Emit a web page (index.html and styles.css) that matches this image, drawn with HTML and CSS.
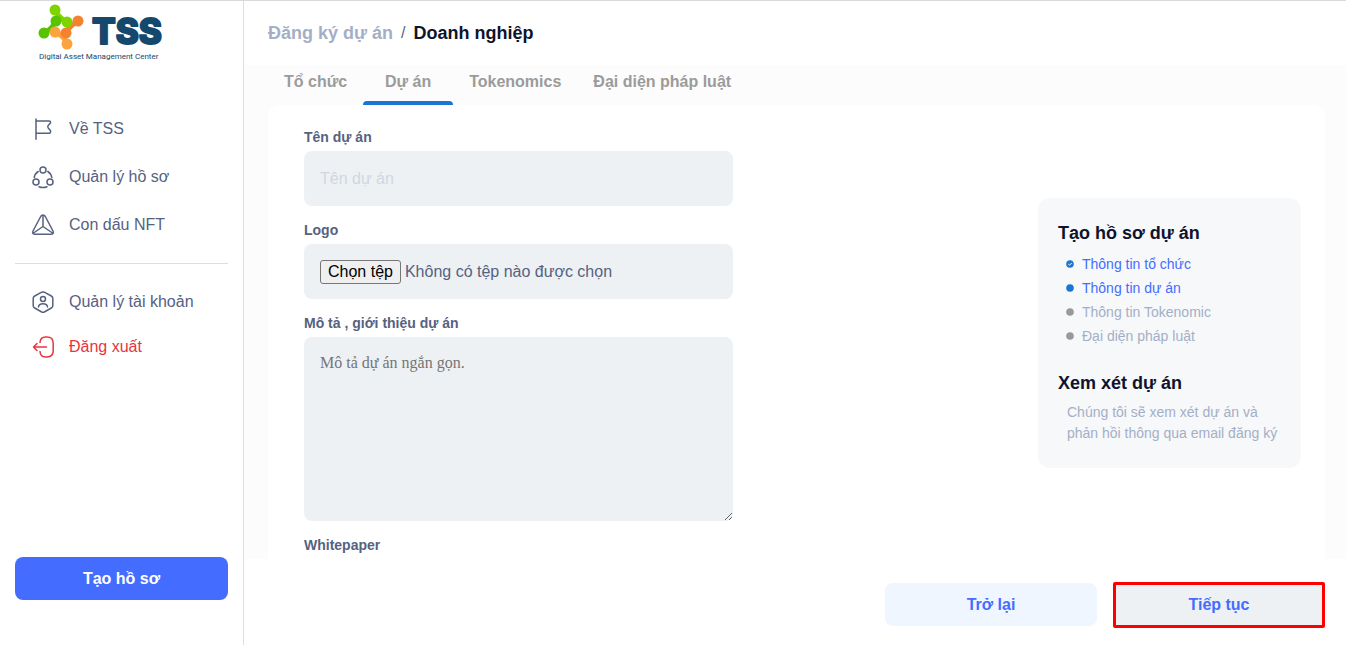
FILE: index.html
```html
<!DOCTYPE html>
<html lang="vi">
<head>
<meta charset="utf-8">
<meta name="viewport" content="width=device-width, initial-scale=1">
<title>Đăng ký dự án</title>
<link rel="stylesheet" href="styles.css">
</head>
<body>
<div class="app">
  <aside class="sidebar">
    <a class="brand" href="#">
      <svg class="brand-logo" viewBox="0 0 128 60" role="img" aria-label="TSS">
        <g stroke-linecap="round" stroke-width="5" fill="none">
          <path d="M18 7Q20 13 29 18" stroke="#7fd400"/>
          <path d="M6 29Q14 25 18 17" stroke="#56c500"/>
          <path d="M17 28Q26 32 29 40" stroke="#fba33c"/>
          <path d="M28 29Q31 22 39 18" stroke="#f5822f"/>
        </g>
        <circle cx="17" cy="6" r="5.500" fill="#7fd400"/><circle cx="29" cy="18" r="5.500" fill="#7fd400"/>
        <circle cx="6" cy="29" r="5.500" fill="#56c500"/><circle cx="18" cy="17" r="5.500" fill="#56c500"/>
        <circle cx="17" cy="28" r="5.500" fill="#fba33c"/><circle cx="29" cy="40" r="5.500" fill="#fba33c"/>
        <circle cx="28" cy="29" r="5.500" fill="#f5822f"/><circle cx="40" cy="17" r="5.500" fill="#f5822f"/>
        <text class="brand-name" x="54" y="40">TSS</text>
        <text class="brand-tagline" x="1" y="55">Digital Asset Management Center</text>
      </svg>
    </a>
    <nav class="nav">
      <a class="nav-item" href="#">
        <svg class="icon" viewBox="0 0 24 24"><path d="M5 2V22.300M5 4h13c1.500 0 2 1.200 1.200 2.200l-2 2.300a2 2 0 0 0 0 2.400l2 2.300c.9 1.200.3 3-1.200 3H5"/></svg>
        <span>Về TSS</span>
      </a>
      <a class="nav-item" href="#">
        <svg class="icon" viewBox="0 0 24 24"><circle cx="12" cy="5" r="3"/><circle cx="5" cy="17" r="3"/><circle cx="19" cy="17" r="3"/><path d="M7.200 6.500A9 9 0 0 0 3.200 12.500M16.800 6.500a9 9 0 0 1 4 6M8 21.700a10 10 0 0 0 8 0"/></svg>
        <span>Quản lý hồ sơ</span>
      </a>
      <a class="nav-item" href="#">
        <svg class="icon" viewBox="0 0 24 24"><path d="M9.700 3.500 2 18c-1 1.900 0 3.300 2 3.300h16c2 0 3-1.400 2-3.300L14.300 3.500c-1.100-1.900-3.500-1.900-4.600 0zM12 2.200v11.300M12 13.500 2.500 20M12 13.500l9.500 6.500"/></svg>
        <span>Con dấu NFT</span>
      </a>
    </nav>
    <nav class="nav nav-account">
      <a class="nav-item" href="#">
        <svg class="icon" viewBox="0 0 24 24"><path d="M10.700 2.200a3 3 0 0 1 2.600 0l7 3.800c1 .6 1.500 1.300 1.500 2.300v7.400c0 1-.5 1.800-1.500 2.300l-7 4a3 3 0 0 1-2.600 0l-7-4c-1-.5-1.500-1.300-1.500-2.300V8.300c0-1 .5-1.700 1.500-2.300z"/><circle cx="12" cy="9" r="2.500"/><path d="M7.500 17c.3-4.500 8.700-4.500 9 0"/></svg>
        <span>Quản lý tài khoản</span>
      </a>
      <a class="nav-item nav-item-danger" href="#">
        <svg class="icon" viewBox="0 0 24 24"><path d="M9 7.500c.3-4 2-5.500 5.500-5.500H16c4.500 0 6.200 1.800 6.200 6.200v7.600c0 4.400-1.700 6.200-6.200 6.200h-1.500c-3.500 0-5.200-1.500-5.500-5.500M15.500 12H2.500M6 8.500 2.500 12 6 15.500"/></svg>
        <span>Đăng xuất</span>
      </a>
    </nav>
    <button class="button button-primary" type="button">Tạo hồ sơ</button>
  </aside>

  <main class="main">
    <header class="page-header">
      <a class="crumb" href="#">Đăng ký dự án</a>
      <span class="crumb-separator">/</span>
      <h1 class="crumb-current">Doanh nghiệp</h1>
    </header>

    <div class="content">
      <div class="tabs" role="tablist">
        <button class="tab" type="button" role="tab">Tổ chức</button>
        <button class="tab tab-active" type="button" role="tab" aria-selected="true">Dự án</button>
        <button class="tab" type="button" role="tab">Tokenomics</button>
        <button class="tab" type="button" role="tab">Đại diện pháp luật</button>
      </div>
      <div class="card">
        <form class="form" id="project-form">
          <div class="field">
            <label class="label" for="project-name">Tên dự án</label>
            <input class="control" id="project-name" type="text" placeholder="Tên dự án">
          </div>
          <div class="field">
            <label class="label" for="project-logo">Logo</label>
            <label class="control file" for="project-logo">
              <input class="file-input" id="project-logo" type="file">
              <span class="file-button">Chọn tệp</span>
              <span>Không có tệp nào được chọn</span>
            </label>
          </div>
          <div class="field">
            <label class="label" for="project-about">Mô tả , giới thiệu dự án</label>
            <textarea class="control control-area" id="project-about" placeholder="Mô tả dự án ngắn gọn."></textarea>
          </div>
          <div class="field">
            <label class="label" for="project-paper">Whitepaper</label>
            <input class="control" id="project-paper" type="text">
          </div>
        </form>
        <aside class="progress">
          <h2 class="progress-title">Tạo hồ sơ dự án</h2>
          <ul class="steps">
            <li class="step step-on"><svg class="dot" viewBox="0 0 8 8"><circle cx="4" cy="4" r="3.800"/><path class="dot-check" d="M2.300 4.100 3.500 5.200 5.800 2.900"/></svg>Thông tin tổ chức</li>
            <li class="step step-on"><svg class="dot" viewBox="0 0 8 8"><circle cx="4" cy="4" r="3.800"/></svg>Thông tin dự án</li>
            <li class="step"><svg class="dot" viewBox="0 0 8 8"><circle cx="4" cy="4" r="3.800"/></svg>Thông tin Tokenomic</li>
            <li class="step"><svg class="dot" viewBox="0 0 8 8"><circle cx="4" cy="4" r="3.800"/></svg>Đại diện pháp luật</li>
          </ul>
          <h2 class="progress-title">Xem xét dự án</h2>
          <p class="progress-note">Chúng tôi sẽ xem xét dự án và phản hồi thông qua email đăng ký</p>
        </aside>
      </div>
    </div>

    <footer class="actions">
      <button class="button button-back" type="button">Trở lại</button>
      <button class="button button-next" type="submit" form="project-form">Tiếp tục</button>
    </footer>
  </main>
</div>
</body>
</html>
```

FILE: styles.css
```css
* {
  box-sizing: border-box;
}

body {
  margin: 0;
  font-family: "Liberation Sans", Arial, sans-serif;
  font-size: 16px;
  color: #56627f;
  background: #fff;
}

h1, h2, p, ul {
  margin: 0;
  padding: 0;
}

a {
  color: inherit;
  text-decoration: none;
}

button, input, textarea {
  font: inherit;
}

.app {
  display: flex;
  height: 100vh;
  border-top: 1px solid #d9d9d9;
}

/* Sidebar */
.sidebar {
  display: flex;
  flex-direction: column;
  flex: 0 0 244px;
  padding: 3px 15px 45px;
  border-right: 1px solid #dedede;
}

.brand {
  display: block;
  padding-left: 23px;
  margin-bottom: 41px;
}

.brand-logo {
  display: block;
  width: 128px;
  height: 60px;
  overflow: visible;
}

.brand-name {
  font-family: Inter, sans-serif;
  font-size: 35px;
  font-weight: 800;
  fill: #15486d;
  stroke: #15486d;
  stroke-width: 2;
  stroke-linejoin: round;
}

.brand-tagline {
  font-family: Roboto, sans-serif;
  font-size: 8px;
  fill: #15486d;
}

.nav {
  display: flex;
  flex-direction: column;
  padding: 0 16px 14px;
}

.nav-item {
  display: flex;
  align-items: center;
  gap: 14px;
  height: 48px;
}

.nav-item-danger {
  color: #e8343e;
}

.nav-account {
  padding-top: 15px;
  border-top: 1px solid #dedede;
}

.nav-account .nav-item {
  height: 45px;
}

.icon {
  flex: none;
  width: 24px;
  height: 24px;
  fill: none;
  stroke: currentColor;
  stroke-width: 1.5;
  stroke-linecap: round;
  stroke-linejoin: round;
}

.button {
  height: 43px;
  border: 0;
  border-radius: 8px;
  font-weight: 700;
  color: #446dff;
}

.button-primary {
  margin-top: auto;
  color: #fff;
  background: #446dff;
}

/* Main column */
.main {
  display: flex;
  flex: 1;
  flex-direction: column;
  min-width: 0;
}

.page-header {
  display: flex;
  flex: 0 0 64px;
  align-items: center;
  gap: 8px;
  padding: 0 24px;
}

.crumb,
.crumb-current {
  font-size: 18px;
  font-weight: 700;
}

.crumb {
  color: #a3afc6;
}

.crumb-current {
  color: #0f132c;
}

.content {
  flex: 1;
  min-height: 0;
  padding: 0 21px 0 24px;
  overflow: hidden;
  background: #fcfcfc;
}

.tabs {
  display: flex;
  height: 40px;
}

.tab {
  min-width: 90px;
  padding: 0 16px 2px;
  border: 0;
  border-bottom: 4px solid transparent;
  font-size: 16px;
  font-weight: 700;
  white-space: nowrap;
  color: #9b9b9b;
  background: none;
}

.tab-active {
  position: relative;
}

.tab-active::after {
  content: "";
  position: absolute;
  right: 0;
  bottom: -4px;
  left: 0;
  height: 4px;
  border-radius: 4px 4px 0 0;
  background: #1976d2;
}

.card {
  display: flex;
  align-items: flex-start;
  justify-content: space-between;
  gap: 24px;
  padding: 24px 24px 24px 36px;
  border-radius: 12px;
  background: #fff;
}

.form {
  flex: 0 1 43%;
}

.field {
  display: flex;
  flex-direction: column;
  gap: 6px;
  margin-bottom: 16px;
}

.label {
  font-size: 14px;
  font-weight: 700;
  line-height: 16px;
}

.control {
  width: 100%;
  height: 55px;
  padding: 16px;
  border: 0;
  border-radius: 8px;
  color: #56627f;
  background: #edf1f4;
}

.control::placeholder {
  color: #d1d7e0;
}

.control-area {
  height: 184px;
  font-family: "Liberation Serif", "Times New Roman", serif;
  line-height: 20px;
  resize: vertical;
}

.control-area::placeholder {
  color: #757575;
}

.file {
  display: flex;
  align-items: center;
  gap: 4px;
}

.file-input {
  position: absolute;
  width: 1px;
  height: 1px;
  opacity: 0;
}

.file-button {
  padding: 1px 7px;
  border: 1px solid #767676;
  border-radius: 3px;
  line-height: 20px;
  color: #000;
  background: #efefef;
}

/* Progress panel */
.progress {
  flex: 0 0 263px;
  margin-top: 69px;
  padding: 23px 20px 24px;
  border-radius: 12px;
  background: #f7f8fa;
}

.progress-title {
  font-size: 18px;
  font-weight: 700;
  line-height: 24px;
  color: #0f132c;
}

.steps {
  margin: 7px 0 23px;
  padding-left: 8px;
  list-style: none;
}

.step {
  display: flex;
  align-items: center;
  gap: 8px;
  font-size: 14px;
  line-height: 24px;
  color: #a3afc6;
}

.step-on {
  color: #446dff;
}

.dot {
  width: 8px;
  height: 8px;
  fill: #999;
}

.step-on .dot {
  fill: #1976d2;
}

.step .dot-check {
  fill: none;
  stroke: #fff;
  stroke-width: 1;
}

.progress-note {
  margin-top: 7px;
  padding-left: 9px;
  font-size: 14px;
  line-height: 21px;
  color: #a3afc6;
}

/* Footer */
.actions {
  display: flex;
  flex: 0 0 86px;
  align-items: center;
  justify-content: flex-end;
  gap: 16px;
  padding: 5px 21px 0;
}

.actions .button {
  width: 212px;
}

.button-back {
  background: #eff6ff;
}

.actions .button-next {
  height: 46px;
  border: 3px solid #f00;
  border-radius: 2px;
  background: #edf1f4;
}
```
